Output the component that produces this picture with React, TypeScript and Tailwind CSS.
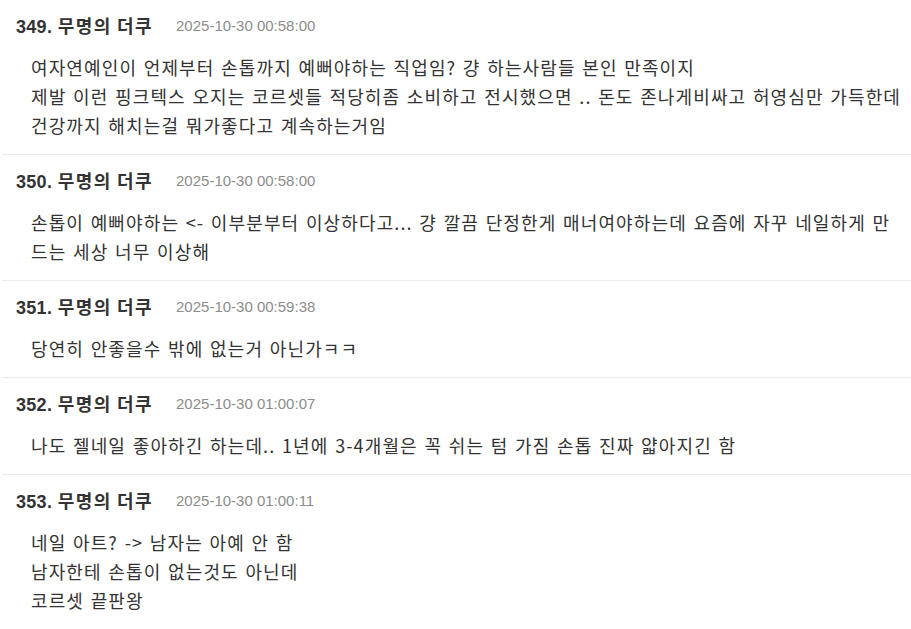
const comments = [
  {
    no: 349,
    date: "2025-10-30 00:58:00",
    lines: [
      "여자연예인이 언제부터 손톱까지 예뻐야하는 직업임? 걍 하는사람들 본인 만족이지",
      "제발 이런 핑크텍스 오지는 코르셋들 적당히좀 소비하고 전시했으면 .. 돈도 존나게비싸고 허영심만 가득한데",
      "건강까지 해치는걸 뭐가좋다고 계속하는거임",
    ],
  },
  {
    no: 350,
    date: "2025-10-30 00:58:00",
    lines: [
      "손톱이 예뻐야하는 <- 이부분부터 이상하다고... 걍 깔끔 단정한게 매너여야하는데 요즘에 자꾸 네일하게 만드는 세상 너무 이상해",
    ],
  },
  {
    no: 351,
    date: "2025-10-30 00:59:38",
    lines: ["당연히 안좋을수 밖에 없는거 아닌가ㅋㅋ"],
  },
  {
    no: 352,
    date: "2025-10-30 01:00:07",
    lines: ["나도 젤네일 좋아하긴 하는데.. 1년에 3-4개월은 꼭 쉬는 텀 가짐 손톱 진짜 얇아지긴 함"],
  },
  {
    no: 353,
    date: "2025-10-30 01:00:11",
    lines: ["네일 아트? -> 남자는 아예 안 함", "남자한테 손톱이 없는것도 아닌데", "코르셋 끝판왕"],
  },
];

export default function App() {
  return (
    <div className="min-h-screen bg-white pl-[2px] text-[#333] font-['Noto_Sans_CJK_KR',sans-serif]">
      {comments.map((c) => (
        <div key={c.no} className="border-b border-[#ebebeb] pt-[13px] pb-[14px]">
          <div className="flex items-center h-[26px] pl-[14px]">
            <span className="text-[18px] font-bold tracking-[1.4px]">
              <span className="font-['Liberation_Sans','Noto_Sans_CJK_KR',sans-serif] tracking-[0.3px]">{c.no}.</span> 무명의 더쿠
            </span>
            <span className="ml-[23px] text-[15px] text-[#8c8c8c] font-['Liberation_Sans',sans-serif]">
              {c.date}
            </span>
          </div>
          <div className="mt-[14px] pl-[29px] pr-[10px] text-[18px] leading-[29px] tracking-[1.12px] [word-spacing:1.5px]">
            {c.lines.map((l, i) => (
              <div key={i}>{l}</div>
            ))}
          </div>
        </div>
      ))}
    </div>
  );
}
